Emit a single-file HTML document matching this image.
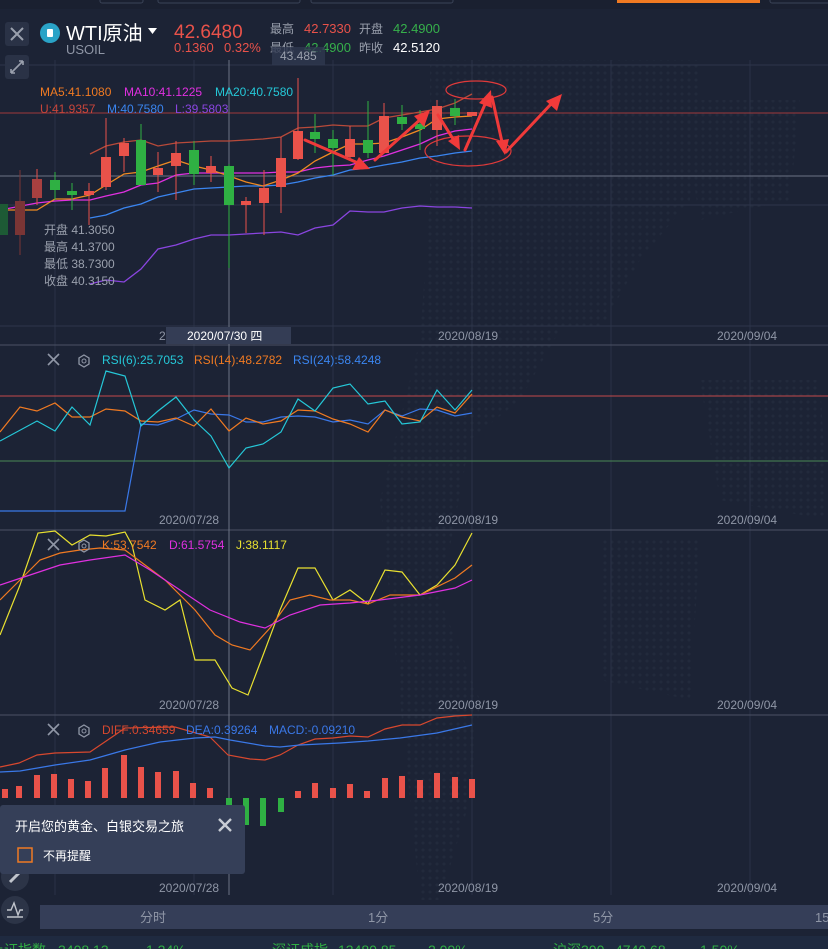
<!DOCTYPE html>
<html><head><meta charset="utf-8"><style>
html,body{margin:0;padding:0;background:#1c2335;width:828px;height:949px;overflow:hidden;font-family:"Liberation Sans","Noto Sans CJK SC",sans-serif}
svg{display:block}
text{font-family:"Liberation Sans","Noto Sans CJK SC",sans-serif}
</style></head><body>
<svg width="828" height="949" viewBox="0 0 828 949" xmlns="http://www.w3.org/2000/svg">
<defs>
<pattern id="dots" width="7" height="7" patternUnits="userSpaceOnUse"><circle cx="3" cy="3" r="1.5" fill="#222a3c"/></pattern>
</defs>
<rect width="828" height="949" fill="#1c2335"/>
<rect x="0" y="0" width="828" height="9" fill="#1a2030"/>
<rect x="100" y="-4" width="43" height="7" rx="2" fill="none" stroke="#3a4357"/>
<rect x="158" y="-4" width="142" height="7" rx="2" fill="none" stroke="#3a4357"/>
<rect x="311" y="-4" width="142" height="7" rx="2" fill="none" stroke="#3a4357"/>
<rect x="617" y="0" width="143" height="3" fill="#f07a22"/>
<rect x="770" y="-4" width="70" height="7" rx="2" fill="none" stroke="#3a4357"/>
<path d="M430,60 L700,60 L690,200 L640,260 L600,330 L560,330 L520,400 L470,440 L440,600 L480,700 L470,800 L440,900 L420,900 L400,700 L380,500 L420,340 L430,200 Z" fill="url(#dots)"/>
<path d="M680,100 L800,100 L790,200 L700,220 Z" fill="url(#dots)"/>
<path d="M700,380 L820,380 L828,520 L720,500 Z" fill="url(#dots)"/>
<path d="M600,540 L700,540 L690,700 L600,680 Z" fill="url(#dots)"/>

<g stroke="#2a3246" stroke-width="1">
<line x1="55" y1="60" x2="55" y2="895"/><line x1="194" y1="60" x2="194" y2="895"/><line x1="333" y1="60" x2="333" y2="895"/><line x1="472" y1="60" x2="472" y2="895"/><line x1="611" y1="60" x2="611" y2="895"/><line x1="750" y1="60" x2="750" y2="895"/>
</g>
<line x1="0" y1="65" x2="828" y2="65" stroke="#2e364a"/>
<line x1="0" y1="205" x2="828" y2="205" stroke="#2e364a"/>
<line x1="0" y1="113" x2="828" y2="113" stroke="#a0393c"/>
<line x1="0" y1="176" x2="828" y2="176" stroke="#6c7385"/>
<line x1="0" y1="326" x2="828" y2="326" stroke="#2e364a"/>
<line x1="0" y1="345" x2="828" y2="345" stroke="#4b5265"/>
<line x1="0" y1="530" x2="828" y2="530" stroke="#4b5265"/>
<line x1="0" y1="715" x2="828" y2="715" stroke="#4b5265"/>
<line x1="0" y1="396" x2="828" y2="396" stroke="#c44a4a"/>
<line x1="0" y1="461" x2="828" y2="461" stroke="#4a8a55"/>
<line x1="229" y1="60" x2="229" y2="895" stroke="#6c7385"/>

<rect x="5" y="22" width="24" height="24" rx="3" fill="#2a3246"/>
<path d="M11,28 L23,40 M23,28 L11,40" stroke="#9aa0ad" stroke-width="2"/>
<rect x="5" y="55" width="24" height="24" rx="3" fill="#2a3246"/>
<path d="M11,73 L23,61 M11,73 l0,-4 M11,73 l4,0 M23,61 l-4,0 M23,61 l0,4" stroke="#9aa0ad" stroke-width="1.6" fill="none"/>
<circle cx="50" cy="33" r="10" fill="#2aa3c7"/>
<rect x="47" y="29" width="6" height="8" rx="1" fill="#fff"/>
<text x="66" y="40" font-size="20" fill="#fff">WTI原油</text>
<path d="M148,28 L157,28 L152.5,34 Z" fill="#fff"/>
<text x="66" y="54" font-size="13" fill="#8f96a6">USOIL</text>
<text x="174" y="38" font-size="19" fill="#e9524a">42.6480</text>
<text x="174" y="52" font-size="13" fill="#e9524a">0.1360</text>
<text x="224" y="52" font-size="13" fill="#e9524a">0.32%</text>
<text x="270" y="33" font-size="12" fill="#9aa0ad">最高</text>
<text x="304" y="33" font-size="13" fill="#e9524a">42.7330</text>
<text x="359" y="33" font-size="12" fill="#9aa0ad">开盘</text>
<text x="393" y="33" font-size="13" fill="#36b04b">42.4900</text>
<text x="270" y="52" font-size="12" fill="#9aa0ad">最低</text>
<text x="304" y="52" font-size="13" fill="#36b04b">42.4900</text>
<text x="359" y="52" font-size="12" fill="#9aa0ad">昨收</text>
<text x="393" y="52" font-size="13" fill="#fff">42.5120</text>
<rect x="272" y="47" width="53" height="18" fill="#2f3850" opacity="0.8"/>
<text x="280" y="60" font-size="12" fill="#9aa0ad">43.485</text>

<text x="40" y="96" font-size="12" fill="#f07a22">MA5:41.1080</text>
<text x="124" y="96" font-size="12" fill="#e030e0">MA10:41.1225</text>
<text x="215" y="96" font-size="12" fill="#25c8d8">MA20:40.7580</text>
<text x="40" y="113" font-size="12" fill="#c8453a">U:41.9357</text>
<text x="107" y="113" font-size="12" fill="#3a85f0">M:40.7580</text>
<text x="175" y="113" font-size="12" fill="#8a45e0">L:39.5803</text>

<g fill="none" stroke-width="1.3">
<polyline stroke="#b84a3a" points="90,154 106,146 124,142 141,140 158,146 176,143 194,142 211,141 229,141 246,140 263,139 281,137 298,128 315,127 333,125 350,126 368,126 384,118 402,115 420,112 437,109 455,103 472,94"/>
<polyline stroke="#8a45e0" points="90,284 106,280 124,282 141,269 158,249 176,245 194,239 211,235 229,235 246,234 263,233 281,232 298,235 315,228 333,225 350,211 368,212 384,212 402,208 420,206 437,207 455,207 472,208"/>
<polyline stroke="#3a85f0" points="90,218 106,215 124,208 141,204 158,197 176,193 194,189 211,188 229,187 246,186 263,186 281,185 298,182 315,178 333,175 350,170 368,168 384,165 402,162 420,158 437,156 455,153 472,151"/>
<polyline stroke="#e030e0" points="0,210 37,203 55,201 72,200 90,200 106,196 124,192 141,185 158,183 176,175 194,173 211,173 229,173 246,173 263,173 281,172 298,172 315,168 333,166 350,165 368,160 384,156 402,150 420,144 437,136 455,131 472,129"/>
<polyline stroke="#f08a22" points="0,210 37,210 55,199 72,199 90,195 106,185 124,174 141,172 158,166 176,160 194,166 211,170 229,176 246,182 263,186 281,180 298,173 315,161 333,152 350,144 368,144 384,143 402,137 420,130 437,119 455,117 472,116"/>
</g>
<g stroke-width="1">
<g stroke="#e9524a" fill="#e9524a">
<line x1="20" y1="170" x2="20" y2="255" stroke="#7a3535"/><rect x="15" y="201" width="10" height="34" fill="#7a3535" stroke="none"/>
<line x1="37" y1="169" x2="37" y2="205"/><rect x="32" y="179" width="10" height="19" stroke="none" fill="#a84040"/>
<line x1="89" y1="183" x2="89" y2="225"/><rect x="84" y="191" width="10" height="4" stroke="none"/>
<line x1="106" y1="118" x2="106" y2="190"/><rect x="101" y="157" width="10" height="30" stroke="none"/>
<line x1="124" y1="138" x2="124" y2="172"/><rect x="119" y="143" width="10" height="13" stroke="none"/>
<line x1="158" y1="152" x2="158" y2="192"/><rect x="153" y="168" width="10" height="7" stroke="none"/>
<line x1="176" y1="141" x2="176" y2="200"/><rect x="171" y="153" width="10" height="13" stroke="none"/>
<line x1="211" y1="156" x2="211" y2="182"/><rect x="206" y="166" width="10" height="7" stroke="none"/>
<line x1="246" y1="197" x2="246" y2="233"/><rect x="241" y="201" width="10" height="4" stroke="none"/>
<line x1="264" y1="170" x2="264" y2="235"/><rect x="259" y="188" width="10" height="15" stroke="none"/>
<line x1="281" y1="137" x2="281" y2="213"/><rect x="276" y="158" width="10" height="29" stroke="none"/>
<line x1="298" y1="78" x2="298" y2="160"/><rect x="293" y="131" width="10" height="28" stroke="none"/>
<line x1="350" y1="126" x2="350" y2="158"/><rect x="345" y="139" width="10" height="18" stroke="none"/>
<line x1="384" y1="103" x2="384" y2="153"/><rect x="379" y="116" width="10" height="37" stroke="none"/>
<line x1="437" y1="100" x2="437" y2="146"/><rect x="432" y="106" width="10" height="24" stroke="none"/>
<rect x="467" y="112" width="10" height="4" stroke="none"/>
</g>
<g stroke="#2fb043" fill="#2fb043">
<rect x="0" y="204" width="8" height="31" fill="#1d5a35" stroke="none"/>
<line x1="55" y1="172" x2="55" y2="200"/><rect x="50" y="180" width="10" height="10" stroke="none"/>
<line x1="72" y1="183" x2="72" y2="210"/><rect x="67" y="191" width="10" height="4" stroke="none"/>
<line x1="141" y1="124" x2="141" y2="185"/><rect x="136" y="140" width="10" height="45" stroke="none"/>
<line x1="194" y1="141" x2="194" y2="185"/><rect x="189" y="150" width="10" height="24" stroke="none"/>
<line x1="229" y1="164" x2="229" y2="268"/><rect x="224" y="166" width="10" height="39" stroke="none"/>
<line x1="315" y1="114" x2="315" y2="153"/><rect x="310" y="132" width="10" height="7" stroke="none"/>
<line x1="333" y1="130" x2="333" y2="175"/><rect x="328" y="139" width="10" height="9" stroke="none"/>
<line x1="368" y1="101" x2="368" y2="158"/><rect x="363" y="140" width="10" height="13" stroke="none"/>
<line x1="402" y1="105" x2="402" y2="130"/><rect x="397" y="117" width="10" height="7" stroke="none"/>
<line x1="420" y1="110" x2="420" y2="150"/><rect x="415" y="124" width="10" height="5" stroke="none"/>
<line x1="455" y1="99" x2="455" y2="125"/><rect x="450" y="108" width="10" height="8" stroke="none"/>
</g>
</g>
<g fill="none" stroke="#e03a3a" stroke-width="1.2">
<ellipse cx="476" cy="90" rx="30" ry="9"/>
<ellipse cx="468" cy="151" rx="43" ry="15"/>
</g>
<g stroke="#f03a3a" stroke-width="3" fill="#f03a3a" stroke-linecap="round">
<line x1="305" y1="140" x2="358" y2="163"/><polygon points="370,169 352,170 359,157" stroke="none"/>
<line x1="375" y1="160" x2="422" y2="118"/><polygon points="430,110 424,127 414,116" stroke="none"/>
<line x1="438" y1="115" x2="455" y2="142"/><polygon points="460,150 448,141 459,135" stroke="none"/>
<line x1="465" y1="150" x2="486" y2="102"/><polygon points="491,90 492,108 479,103" stroke="none"/>
<line x1="492" y1="97" x2="502" y2="142"/><polygon points="505,155 496,141 509,139" stroke="none"/>
<line x1="506" y1="152" x2="552" y2="103"/><polygon points="562,94 557,111 546,101" stroke="none"/>
</g>
<g font-size="12" fill="#9aa0ad">
<text x="44" y="234">开盘 41.3050</text>
<text x="44" y="251">最高 41.3700</text>
<text x="44" y="268">最低 38.7300</text>
<text x="44" y="285">收盘 40.3150</text>
</g>
<g font-size="12" fill="#8f96a6">
<text x="159" y="340">2020</text>
<text x="438" y="340">2020/08/19</text>
<text x="717" y="340">2020/09/04</text>
</g>
<rect x="166" y="327" width="125" height="17" fill="#343d55"/>
<text x="187" y="340" font-size="12" fill="#fff">2020/07/30 四</text>

<path d="M48,354 L59,365 M59,354 L48,365" stroke="#8f96a6" stroke-width="1.6"/>
<polygon points="84,355 89,358 89,364 84,367 79,364 79,358" fill="none" stroke="#8f96a6" stroke-width="1.3"/><circle cx="84" cy="361" r="2" fill="none" stroke="#8f96a6"/>
<text x="102" y="364" font-size="12" fill="#25c8d8">RSI(6):25.7053</text>
<text x="194" y="364" font-size="12" fill="#f07a22">RSI(14):48.2782</text>
<text x="293" y="364" font-size="12" fill="#3a85f0">RSI(24):58.4248</text>
<g fill="none" stroke-width="1.2">
<polyline stroke="#3a78e8" points="0,511 125,511 141,424 158,425 176,419 194,410 211,414 229,415 246,422 263,422 281,417 298,416 315,417 333,422 350,420 368,424 385,410 402,416 420,409 437,410 455,416 472,413"/>
<polyline stroke="#f07a22" points="0,432 20,407 37,411 55,403 72,417 90,417 106,409 125,411 141,421 158,422 176,418 194,426 211,409 229,431 246,418 263,424 281,421 298,410 315,411 333,419 350,424 368,432 385,410 402,417 420,421 437,407 455,413 472,394"/>
<polyline stroke="#25c8d8" points="0,441 37,421 55,431 72,407 90,425 106,371 125,376 141,426 158,411 176,397 194,420 211,436 229,468 246,448 263,444 281,432 298,399 315,411 333,388 350,384 368,404 385,401 402,424 420,422 437,390 455,410 472,390"/>
</g>
<g font-size="12" fill="#8f96a6">
<text x="159" y="524">2020/07/28</text><text x="438" y="524">2020/08/19</text><text x="717" y="524">2020/09/04</text>
</g>

<g fill="none" stroke-width="1.2">
<polyline stroke="#e8e030" points="0,635 20,585 38,533 55,531 72,545 90,535 106,536 125,532 132,545 145,600 165,610 180,600 195,660 215,660 232,688 248,695 265,650 280,610 298,568 315,568 333,600 350,590 368,604 385,570 402,572 420,595 437,585 455,565 472,533"/>
<polyline stroke="#f07a22" points="0,600 20,580 40,560 60,553 80,550 100,548 125,550 145,565 165,580 195,610 215,635 232,645 250,650 270,628 290,600 310,595 330,600 350,600 368,604 390,595 420,595 455,578 472,565"/>
<polyline stroke="#e030e0" points="0,585 30,575 60,565 90,560 125,555 150,570 180,590 210,610 240,622 265,628 290,615 320,605 350,603 380,600 420,595 455,588 472,580"/>
</g>
<path d="M48,539 L59,550 M59,539 L48,550" stroke="#8f96a6" stroke-width="1.6"/>
<polygon points="84,540 89,543 89,549 84,552 79,549 79,543" fill="none" stroke="#8f96a6" stroke-width="1.3"/><circle cx="84" cy="546" r="2" fill="none" stroke="#8f96a6"/>
<text x="102" y="549" font-size="12" fill="#f07a22">K:53.7542</text>
<text x="169" y="549" font-size="12" fill="#e030e0">D:61.5754</text>
<text x="236" y="549" font-size="12" fill="#e8e030">J:38.1117</text>
<g font-size="12" fill="#8f96a6">
<text x="159" y="709">2020/07/28</text><text x="438" y="709">2020/08/19</text><text x="717" y="709">2020/09/04</text>
</g>

<g fill="#e9524a">
<rect x="2" y="789" width="6" height="9"/><rect x="16" y="786" width="6" height="12"/><rect x="34" y="775" width="6" height="23"/><rect x="51" y="774" width="6" height="24"/><rect x="68" y="779" width="6" height="19"/><rect x="85" y="781" width="6" height="17"/><rect x="102" y="768" width="6" height="30"/><rect x="121" y="755" width="6" height="43"/><rect x="138" y="767" width="6" height="31"/><rect x="155" y="772" width="6" height="26"/><rect x="173" y="771" width="6" height="27"/><rect x="190" y="783" width="6" height="15"/><rect x="207" y="788" width="6" height="10"/>
<rect x="295" y="791" width="6" height="7"/><rect x="312" y="783" width="6" height="15"/><rect x="330" y="788" width="6" height="10"/><rect x="347" y="784" width="6" height="14"/><rect x="364" y="791" width="6" height="7"/><rect x="382" y="778" width="6" height="20"/><rect x="399" y="776" width="6" height="22"/><rect x="417" y="780" width="6" height="18"/><rect x="434" y="773" width="6" height="25"/><rect x="452" y="777" width="6" height="21"/><rect x="469" y="779" width="6" height="19"/>
</g>
<g fill="#2fb043">
<rect x="226" y="798" width="6" height="18"/><rect x="243" y="798" width="6" height="27"/><rect x="260" y="798" width="6" height="28"/><rect x="278" y="798" width="6" height="14"/>
</g>
<g fill="none" stroke-width="1.2">
<polyline stroke="#d8482e" points="0,767 19,763 37,755 55,753 90,752 115,735 125,728 175,727 210,737 228,755 250,759 265,760 280,755 298,745 315,739 333,738 350,736 368,737 385,729 402,725 420,725 437,718 455,716 472,715"/>
<polyline stroke="#3a78e8" points="0,772 20,771 55,765 90,760 125,750 160,742 195,738 215,737 230,740 265,746 280,747 300,745 340,743 368,741 400,738 437,733 472,725"/>
</g>
<path d="M48,724 L59,735 M59,724 L48,735" stroke="#8f96a6" stroke-width="1.6"/>
<polygon points="84,725 89,728 89,734 84,737 79,734 79,728" fill="none" stroke="#8f96a6" stroke-width="1.3"/><circle cx="84" cy="731" r="2" fill="none" stroke="#8f96a6"/>
<text x="102" y="734" font-size="12" fill="#d8482e">DIFF:0.34659</text>
<text x="186" y="734" font-size="12" fill="#3a78e8">DEA:0.39264</text>
<text x="269" y="734" font-size="12" fill="#3a78e8">MACD:-0.09210</text>
<g font-size="12" fill="#8f96a6">
<text x="159" y="892">2020/07/28</text><text x="438" y="892">2020/08/19</text><text x="717" y="892">2020/09/04</text>
</g>

<circle cx="15" cy="877" r="14" fill="#2c3447"/>
<path d="M10,882 L19,873" stroke="#c0c4cc" stroke-width="3"/>
<circle cx="15" cy="910" r="14" fill="#2c3447"/>
<path d="M7,910 L11,910 L14,903 L18,915 L20,910 L23,910 M7,917 L23,917" stroke="#c0c4cc" stroke-width="1.4" fill="none"/>

<rect x="0" y="805" width="245" height="69" rx="3" fill="#353f58"/>
<text x="15" y="831" font-size="13" fill="#fff">开启您的黄金、白银交易之旅</text>
<path d="M219,819 L231,831 M231,819 L219,831" stroke="#c8ccd4" stroke-width="2.4"/>
<rect x="18" y="848" width="14" height="14" fill="none" stroke="#f07a22" stroke-width="1.5"/>
<text x="43" y="860" font-size="12" fill="#fff">不再提醒</text>

<rect x="40" y="905" width="788" height="24" fill="#353e58"/>
<g font-size="13" fill="#8f96a6">
<text x="140" y="922">分时</text><text x="368" y="922">1分</text><text x="593" y="922">5分</text><text x="815" y="922">15</text>
</g>
<rect x="0" y="936" width="828" height="13" fill="#1f2a40"/>
<g font-size="14" fill="#2fb043">
<text x="-10" y="955">上证指数</text><text x="58" y="955">3408.13</text><text x="146" y="955">1.24%</text>
<text x="272" y="955">深证成指</text><text x="338" y="955">13480.85</text><text x="428" y="955">2.09%</text>
<text x="553" y="955">沪深300</text><text x="615" y="955">4740.68</text><text x="700" y="955">1.50%</text>
</g>
</svg>
</body></html>
